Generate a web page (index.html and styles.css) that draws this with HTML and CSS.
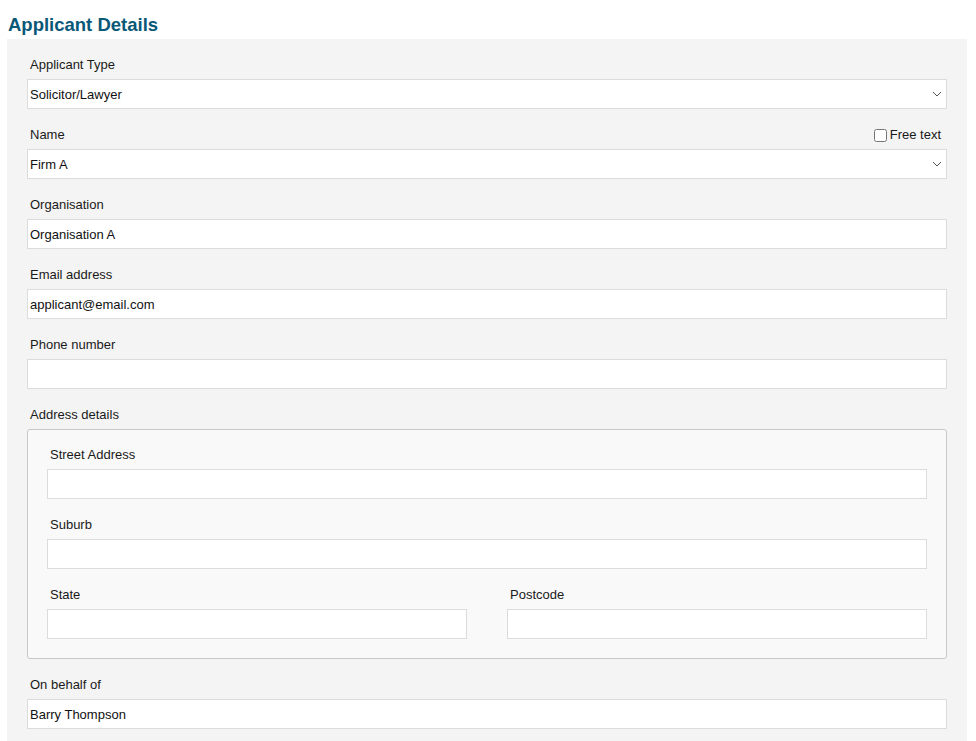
FILE: index.html
```html
<!DOCTYPE html>
<html lang="en">
<head>
    <meta charset="UTF-8">
    <meta name="viewport" content="width=device-width, initial-scale=1.0">
    <title>Applicant Details</title>
    <link rel="stylesheet" href="styles.css">
</head>
<body>
    <h1 class="page-title">Applicant Details</h1>

    <div class="panel">
        <div class="field">
            <label class="field-label" for="applicantType">Applicant Type</label>
            <div class="select-wrap">
                <select id="applicantType" class="field-input">
                    <option>Solicitor/Lawyer</option>
                </select>
                <svg class="chevron" width="10" height="6" viewBox="0 0 10 6"><path d="M1 1l4 4 4-4" fill="none" stroke="#555" stroke-width="1"/></svg>
            </div>
        </div>

        <div class="field">
            <div class="label-row">
                <label class="field-label" for="name">Name</label>
                <label class="free-text"><input type="checkbox"> Free text</label>
            </div>
            <div class="select-wrap">
                <select id="name" class="field-input">
                    <option>Firm A</option>
                </select>
                <svg class="chevron" width="10" height="6" viewBox="0 0 10 6"><path d="M1 1l4 4 4-4" fill="none" stroke="#555" stroke-width="1"/></svg>
            </div>
        </div>

        <div class="field">
            <label class="field-label" for="organisation">Organisation</label>
            <input type="text" id="organisation" class="field-input" value="Organisation A">
        </div>

        <div class="field">
            <label class="field-label" for="email">Email address</label>
            <input type="text" id="email" class="field-input" value="applicant@email.com">
        </div>

        <div class="field">
            <label class="field-label" for="phone">Phone number</label>
            <input type="text" id="phone" class="field-input">
        </div>

        <div class="field">
            <span class="field-label">Address details</span>
            <div class="address-box">
                <div class="field">
                    <label class="field-label" for="street">Street Address</label>
                    <input type="text" id="street" class="field-input">
                </div>
                <div class="field">
                    <label class="field-label" for="suburb">Suburb</label>
                    <input type="text" id="suburb" class="field-input">
                </div>
                <div class="field-pair">
                    <div class="field">
                        <label class="field-label" for="state">State</label>
                        <input type="text" id="state" class="field-input">
                    </div>
                    <div class="field">
                        <label class="field-label" for="postcode">Postcode</label>
                        <input type="text" id="postcode" class="field-input">
                    </div>
                </div>
            </div>
        </div>

        <div class="field">
            <label class="field-label" for="behalf">On behalf of</label>
            <input type="text" id="behalf" class="field-input" value="Barry Thompson">
        </div>
    </div>
</body>
</html>
```

FILE: styles.css
```css
* {
    margin: 0;
    padding: 0;
    box-sizing: border-box;
    font-family: 'Liberation Sans', Arial, sans-serif;
}

body {
    background: #fff;
    padding: 0 9px 0 7px;
    color: #1a1a1a;
}

.page-title {
    color: #0a5878;
    font-size: 18.5px;
    font-weight: bold;
    line-height: 22px;
    padding: 14px 0 3px 1px;
}

.panel {
    background: #f4f4f4;
    padding: 17px 20px 17px 20px;
}

.field {
    margin-bottom: 17px;
}

.field-label {
    display: block;
    font-size: 13px;
    line-height: 16px;
    padding: 1px 0 0 3px;
    margin-bottom: 6px;
}

.label-row {
    display: flex;
    justify-content: space-between;
    align-items: center;
    margin-bottom: 6px;
}

.label-row .field-label {
    margin-bottom: 0;
}

.free-text {
    display: flex;
    align-items: center;
    font-size: 13px;
    line-height: 16px;
    padding: 1px 6px 0 0;
}

.free-text input {
    width: 13px;
    height: 13px;
    margin: 0 3px 0 0;
}

.field-input {
    display: block;
    width: 100%;
    height: 30px;
    border: 1px solid #dcdcdc;
    background: #fff;
    padding: 0 2px;
    font-size: 13px;
    color: #111;
    outline: none;
    border-radius: 0;
}

select.field-input {
    appearance: none;
    -webkit-appearance: none;
}

.select-wrap {
    position: relative;
}

.chevron {
    position: absolute;
    right: 5px;
    top: 12px;
    pointer-events: none;
}

.address-box {
    background: #f9f9f9;
    border: 1px solid #c8c8c8;
    border-radius: 3px;
    padding: 16px 19px 2px 19px;
}

.field-pair {
    display: grid;
    grid-template-columns: 1fr 1fr;
    gap: 40px;
}
```
